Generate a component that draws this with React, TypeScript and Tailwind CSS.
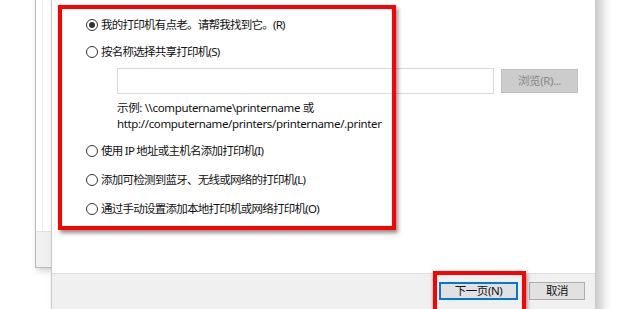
import React from 'react';

// 添加打印机向导：“找不到我想要的打印机”页面截图。

const font = { fontFamily: '"Noto Sans", "Noto Sans CJK SC", sans-serif' };

const Radio: React.FC<{ checked?: boolean; label: string }> = ({ checked, label }) => (
  <label className="flex items-center h-[14px] gap-[3px] text-[11.5px] text-[#111] leading-none">
    <span className="w-[12px] h-[12px] rounded-full border border-[#333] bg-white flex items-center justify-center shrink-0">
      {checked && <span className="w-[6px] h-[6px] rounded-full bg-[#333]" />}
    </span>
    <span className="whitespace-nowrap tracking-[-0.75px]">{label}</span>
  </label>
);

const Button: React.FC<{ label: string; primary?: boolean }> = ({ label, primary }) => (
  <button
    className={
      'h-[18px] flex items-center justify-center text-[11.5px] text-[#111] bg-[#e1e1e1] leading-none tracking-[-0.4px] ' +
      (primary ? 'w-[79px] border border-[#0078d7] shadow-[inset_0_0_0_1px_#0078d7]' : 'w-[56px] border border-[#adadad]')
    }
  >
    {label}
  </button>
);

export default function App() {
  return (
    <div className="relative w-[620px] h-[309px] bg-white overflow-hidden" style={font}>
      {/* background window behind the dialog */}
      <div className="absolute left-[35px] top-[-10px] w-[120px] h-[278px] border border-[#b9b9b9] bg-white flex flex-col shadow-[2px_3px_6px_rgba(0,0,0,0.18)]">
        <div className="flex-1 ml-[6px] border-l border-[#ececec]" />
        <div className="h-[36px] bg-[#f0f0f0] border-t border-[#e3e3e3]" />
      </div>

      {/* wizard dialog */}
      <div className="absolute left-[51px] top-[-10px] w-[545px] h-[330px] bg-white border-l border-r border-[#c9c9c9] flex flex-col shadow-[6px_0_10px_rgba(0,0,0,0.22)]">
        <div className="flex-1 pl-[34px] pt-[28px] flex flex-col">
          <Radio checked label="我的打印机有点老。请帮我找到它。(R)" />
          <div className="mt-[13px]">
            <Radio label="按名称选择共享打印机(S)" />
          </div>
          <div className="pl-[31px] mt-[9px] flex items-center gap-[7px]">
            <div className="w-[377px] h-[26px] border border-[#d9d9d9] bg-white" />
            <div className="w-[77px] h-[24px] border border-[#bfbfbf] bg-[#cccccc] flex items-center justify-center text-[11.5px] tracking-[-0.4px] text-[#888]">
              浏览(R)...
            </div>
          </div>
          <div className="pl-[31px] mt-[6px] text-[11.5px] leading-[16px] tracking-[-0.35px] text-[#111]">
            <div>示例: \\computername\printername 或</div>
            <div>http://computername/printers/printername/.printer</div>
          </div>
          <div className="mt-[12px] flex flex-col gap-[15px]">
            <Radio label="使用 IP 地址或主机名添加打印机(I)" />
            <Radio label="添加可检测到蓝牙、无线或网络的打印机(L)" />
            <Radio label="通过手动设置添加本地打印机或网络打印机(O)" />
          </div>
        </div>
        <div className="h-[47px] bg-[#f0f0f0] border-t border-[#dfdfdf] flex justify-end gap-[11px] pt-[8px] pr-[10px]">
          <Button primary label="下一页(N)" />
          <Button label="取消" />
        </div>
      </div>

      {/* red annotation boxes */}
      <div className="absolute left-[58px] top-[5px] w-[338px] h-[225px] border-[4px] border-[#ff0000] shadow-[2px_3px_4px_rgba(0,0,0,0.45)]" />
      <div className="absolute left-[433px] top-[271px] w-[93px] h-[50px] border-[4px] border-[#ff0000] shadow-[1px_2px_4px_rgba(0,0,0,0.45)]" />
    </div>
  );
}
